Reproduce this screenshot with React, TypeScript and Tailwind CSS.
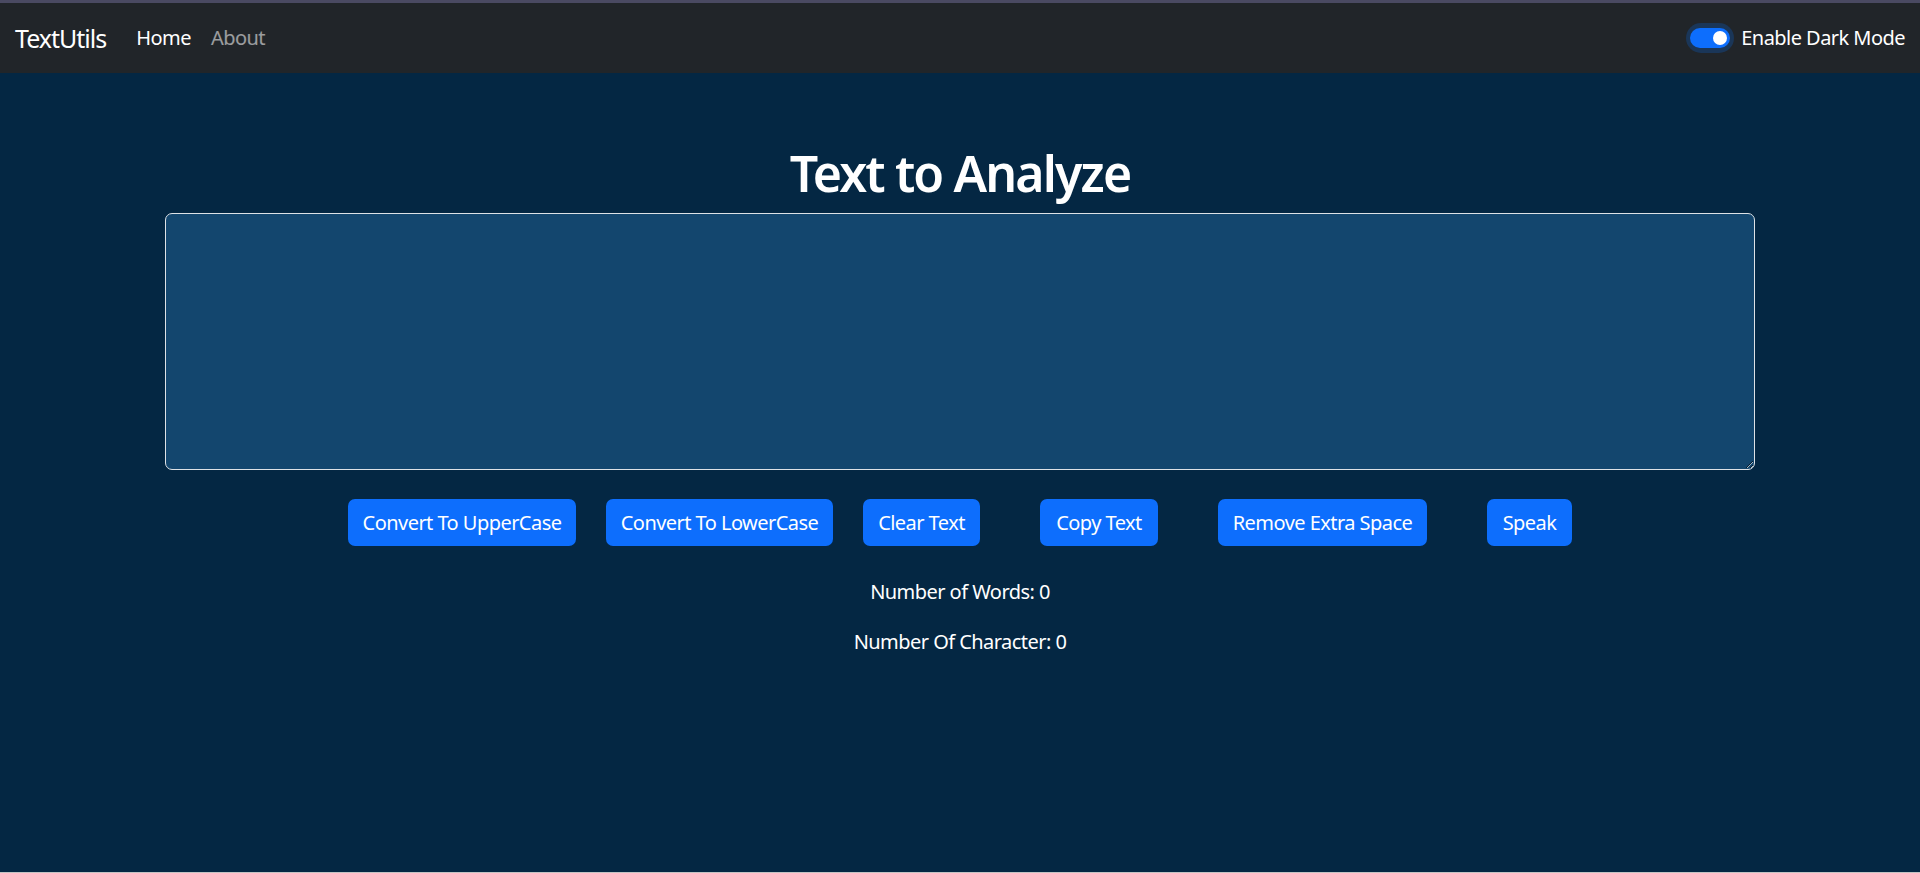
import { useState } from "react";

const font = { fontFamily: '"Noto Sans", "Open Sans", sans-serif' };

const buttons = [
  { label: "Convert To UpperCase", cls: "w-[228px]" },
  { label: "Convert To LowerCase", cls: "w-[227px] ml-[30px]" },
  { label: "Clear Text", cls: "w-[117px] ml-[30px]" },
  { label: "Copy Text", cls: "w-[118px] ml-[60px]" },
  { label: "Remove Extra Space", cls: "w-[209px] ml-[60px]" },
  { label: "Speak", cls: "w-[85px] ml-[60px]" },
];

function Navbar() {
  return (
    <nav className="h-[70px] bg-[#212529] flex items-center px-[15px]">
      <span className="text-[25px] text-white mr-[20px] leading-none tracking-[-0.04em]">TextUtils</span>
      <a className="px-[10px] text-[20px] text-white leading-none">Home</a>
      <a className="px-[10px] text-[20px] text-white/55 leading-none">About</a>

      <div className="ml-auto flex items-center">
        {/* switch, checked, with focus ring */}
        <div className="w-[48px] h-[30px] rounded-full bg-[#1a3658] flex items-center justify-center">
          <div className="w-[40px] h-[20px] rounded-full bg-[#0d6efd] flex items-center justify-end pr-[3px]">
            <span className="w-[14px] h-[14px] rounded-full bg-white" />
          </div>
        </div>
        <span className="ml-[7px] text-[20px] text-white leading-none">Enable Dark Mode</span>
      </div>
    </nav>
  );
}

export default function App() {
  const [text, setText] = useState("");
  const words = text.split(/\s+/).filter((w) => w.length > 0).length;

  return (
    <div className="min-h-[873px] flex flex-col bg-[#042743] tracking-[-0.034em]" style={font}>
      <div className="h-[3px] bg-[#4a4a62]" />
      <Navbar />

      <main className="flex-1 w-[1590px] mx-auto pt-[70px]">
        <h1 className="text-[50px] leading-[60px] font-semibold text-white text-center mb-[10px] tracking-[-0.037em]">
          Text to Analyze
        </h1>
        <textarea
          value={text}
          onChange={(e) => setText(e.target.value)}
          rows={8}
          className="block w-full h-[257px] bg-[#13466e] text-white text-[20px] leading-[30px] px-[15px] py-[7px] border border-[#dee2e6] rounded-[7px] outline-none"
        />

        <div className="flex justify-center mt-[29px]">
          {buttons.map((b) => (
            <button
              key={b.label}
              className={`${b.cls} h-[47px] shrink-0 rounded-[7px] bg-[#0d6efd] text-white text-[20px] leading-[30px] whitespace-nowrap`}
            >
              {b.label}
            </button>
          ))}
        </div>

        <div className="mt-[31px] text-white text-[20px] leading-[30px] text-center">
          <p className="mb-[20px]">Number of Words: {words}</p>
          <p>Number Of Character: {text.length}</p>
        </div>
      </main>

      <div className="h-[1px] bg-[#c4c4c4]" />
    </div>
  );
}
